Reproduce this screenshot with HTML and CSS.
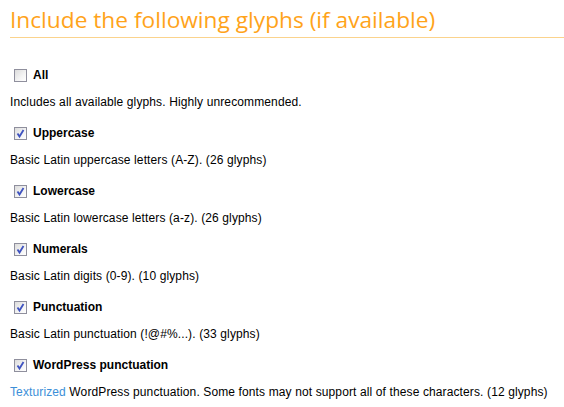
FILE: index.html
```html
<!DOCTYPE html>
<html>
<head>
<meta charset="utf-8">
<link rel="stylesheet" href="styles.css">
</head>
<body>
<div class="page">
  <h2 class="title">Include the following glyphs (if available)</h2>
  <div class="group">
    <label class="opt"><span class="cb"></span><span class="name">All</span></label>
    <p class="desc">Includes all available glyphs. Highly unrecommended.</p>
  </div>
  <div class="group">
    <label class="opt"><span class="cb checked"><svg viewBox="0 0 13 13" width="13" height="13"><path d="M3.5 6.5 L5.5 9.5 L9.5 3" fill="none" stroke="#3f53c0" stroke-width="1.8"/></svg></span><span class="name">Uppercase</span></label>
    <p class="desc">Basic Latin uppercase letters (A-Z). (26 glyphs)</p>
  </div>
  <div class="group">
    <label class="opt"><span class="cb checked"><svg viewBox="0 0 13 13" width="13" height="13"><path d="M3.5 6.5 L5.5 9.5 L9.5 3" fill="none" stroke="#3f53c0" stroke-width="1.8"/></svg></span><span class="name">Lowercase</span></label>
    <p class="desc">Basic Latin lowercase letters (a-z). (26 glyphs)</p>
  </div>
  <div class="group">
    <label class="opt"><span class="cb checked"><svg viewBox="0 0 13 13" width="13" height="13"><path d="M3.5 6.5 L5.5 9.5 L9.5 3" fill="none" stroke="#3f53c0" stroke-width="1.8"/></svg></span><span class="name">Numerals</span></label>
    <p class="desc">Basic Latin digits (0-9). (10 glyphs)</p>
  </div>
  <div class="group">
    <label class="opt"><span class="cb checked"><svg viewBox="0 0 13 13" width="13" height="13"><path d="M3.5 6.5 L5.5 9.5 L9.5 3" fill="none" stroke="#3f53c0" stroke-width="1.8"/></svg></span><span class="name">Punctuation</span></label>
    <p class="desc">Basic Latin punctuation (!@#%...). (33 glyphs)</p>
  </div>
  <div class="group">
    <label class="opt"><span class="cb checked"><svg viewBox="0 0 13 13" width="13" height="13"><path d="M3.5 6.5 L5.5 9.5 L9.5 3" fill="none" stroke="#3f53c0" stroke-width="1.8"/></svg></span><span class="name">WordPress punctuation</span></label>
    <p class="desc"><a class="link" href="#">Texturized</a> WordPress punctuation. Some fonts may not support all of these characters. (12 glyphs)</p>
  </div>
</div>
</body>
</html>
```
FILE: styles.css
```css
html, body {
  margin: 0;
  padding: 0;
  background: #fff;
}
.page {
  padding: 0 0 0 10px;
  font-family: "Liberation Sans", Arial, sans-serif;
  font-size: 12px;
  color: #000;
}
.title {
  margin: 0;
  padding-top: 6px;
  padding-bottom: 4px;
  font-family: "Open Sans", "Noto Sans", sans-serif;
  font-weight: 400;
  font-size: 22.7px;
  line-height: 27px;
  color: #ffa31a;
  border-bottom: 1px solid #fbd38c;
  margin-bottom: 29px;
}
.group {
  display: flex;
  flex-direction: column;
}
.opt {
  display: flex;
  align-items: center;
  gap: 6px;
  padding-left: 4px;
  height: 16px;
}
.cb {
  width: 11px;
  height: 11px;
  border: 1px solid #8f8f9d;
  background: linear-gradient(135deg, #dcdcdc 0%, #f4f4f4 60%, #fff 100%);
  display: inline-flex;
  position: relative;
}
.cb svg {
  position: absolute;
  left: -1px;
  top: -1px;
}
.name {
  font-weight: bold;
}
.desc {
  margin: 11px 0 15px;
  line-height: 16px;
  letter-spacing: 0.12px;
}
.link {
  color: #3c8fd8;
  text-decoration: none;
}
```
